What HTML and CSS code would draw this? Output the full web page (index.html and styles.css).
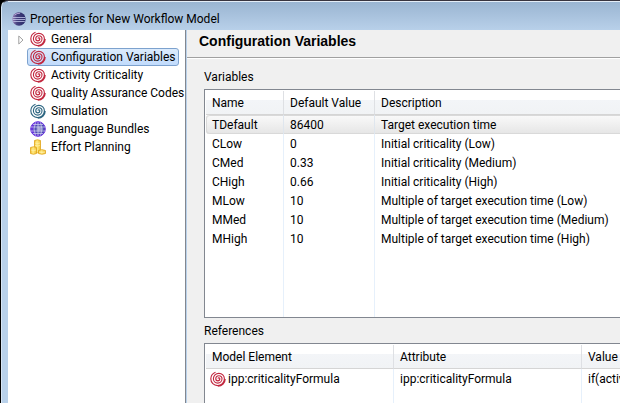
FILE: index.html
```html
<!DOCTYPE html>
<html lang="en">
<head>
<meta charset="utf-8">
<title>Properties for New Workflow Model</title>
<link rel="stylesheet" href="styles.css">
</head>
<body>
<svg class="defs" aria-hidden="true">
  <defs>
    <symbol id="spiral" viewBox="0 0 16 16">
      <path d="M8 7.600A.9 .9 0 0 1 9.800 7.800A2 2 0 0 1 5.800 7.800A3.100 3.100 0 0 1 12 7.800A4.300 4.300 0 0 1 3.400 7.800A5.500 5.500 0 0 1 14.400 7.800A6.800 6.800 0 0 1 .8 7.800A7.200 7.200 0 0 1 5.500 1.200M15.200 8A7.200 7.200 0 0 1 8 15.200" fill="none" stroke="currentColor" stroke-width="1.15"/>
    </symbol>
    <linearGradient id="orb" x1="0" y1="0" x2="1" y2="0">
      <stop offset="0" stop-color="#9a7fb5"/><stop offset=".35" stop-color="#44417f"/><stop offset="1" stop-color="#292a68"/>
    </linearGradient>
    <radialGradient id="world" cx=".6" cy=".5" r=".5">
      <stop offset="0" stop-color="#b5b8dc"/><stop offset=".6" stop-color="#4a4bb0"/><stop offset="1" stop-color="#6a35dc"/>
    </radialGradient>
    <linearGradient id="gold" x1="0" y1="0" x2="1" y2="0">
      <stop offset="0" stop-color="#f0bc25"/><stop offset=".4" stop-color="#ffec8a"/><stop offset="1" stop-color="#f1c030"/>
    </linearGradient>
  </defs>
</svg>
<div class="window">
  <header class="titlebar">
    <svg class="app-icon" viewBox="0 0 14 14" aria-hidden="true">
      <circle cx="7" cy="7" r="6.7" fill="url(#orb)"/>
      <path d="M1 5.5H13M.7 7.5H13.3M1.2 9.5H12.8" stroke="#c3c8ea" stroke-width=".8"/>
      <path d="M2.5 3Q5 1 8 1.2" stroke="#b9a7d6" fill="none"/>
    </svg>
    <span>Properties for New Workflow Model</span>
  </header>
  <div class="content">
    <nav class="tree">
      <a class="item" href="#general"><svg class="arrow" viewBox="0 0 6 10"><path d="M.8 1L5 5L.8 9Z" fill="#fff" stroke="#a0a0a0"/></svg><svg class="icon red"><use href="#spiral"/></svg><span>General</span></a>
      <a class="item selected" href="#variables" aria-current="page"><svg class="icon red"><use href="#spiral"/></svg><span>Configuration Variables</span></a>
      <a class="item" href="#criticality"><svg class="icon red"><use href="#spiral"/></svg><span>Activity Criticality</span></a>
      <a class="item" href="#quality"><svg class="icon red"><use href="#spiral"/></svg><span>Quality Assurance Codes</span></a>
      <a class="item" href="#simulation"><svg class="icon teal"><use href="#spiral"/></svg><span>Simulation</span></a>
      <a class="item" href="#bundles"><svg class="icon" viewBox="0 0 16 16"><circle cx="8" cy="8" r="7.3" fill="url(#world)" stroke="#6834dd"/><path d="M1 6H15M1 10H15M3 3.5H13M3 12.5H13M8 1V15M5.5 1.5Q2.5 8 5.5 14.5M10.5 1.5Q13.5 8 10.5 14.5" fill="none" stroke="#d5d6f0" stroke-width=".7"/></svg><span>Language Bundles</span></a>
      <a class="item" href="#effort"><svg class="icon" viewBox="0 0 16 16"><g fill="url(#gold)" stroke="#dfa51c" stroke-width=".8"><path d="M4.500 1.500Q7.500 0 10.500 1.500V13Q7.500 14.500 4.500 13Z"/><path d="M.5 8.500Q3.500 7 6.500 8.500V14.500Q3.500 16 .5 14.500Z"/><path d="M8.500 11.500Q12 9.800 15.500 11.500V14.500Q12 16 8.500 14.500Z"/></g><path d="M5 4Q7.500 5 10 4M5 6.500Q7.500 7.500 10 6.500M1 11Q3.500 12.200 6 11M9 13Q12 14 15 13" fill="none" stroke="#fff3b5" stroke-width=".7"/></svg><span>Effort Planning</span></a>
    </nav>
    <main class="page">
      <h1>Configuration Variables</h1>
      <section class="body">
        <h2>Variables</h2>
        <div class="grid variables">
          <table>
            <colgroup><col class="c-name"><col class="c-default"><col></colgroup>
            <thead><tr><th>Name</th><th>Default Value</th><th>Description</th></tr></thead>
            <tbody>
              <tr class="current"><td>TDefault</td><td>86400</td><td>Target execution time</td></tr>
              <tr><td>CLow</td><td>0</td><td>Initial criticality (Low)</td></tr>
              <tr><td>CMed</td><td>0.33</td><td>Initial criticality (Medium)</td></tr>
              <tr><td>CHigh</td><td>0.66</td><td>Initial criticality (High)</td></tr>
              <tr><td>MLow</td><td>10</td><td>Multiple of target execution time (Low)</td></tr>
              <tr><td>MMed</td><td>10</td><td>Multiple of target execution time (Medium)</td></tr>
              <tr><td>MHigh</td><td>10</td><td>Multiple of target execution time (High)</td></tr>
              <tr class="filler"><td></td><td></td><td></td></tr>
            </tbody>
          </table>
        </div>
        <h2>References</h2>
        <div class="grid references">
          <table>
            <colgroup><col class="c-element"><col class="c-attribute"><col></colgroup>
            <thead><tr><th>Model Element</th><th>Attribute</th><th>Value</th></tr></thead>
            <tbody>
              <tr><td class="with-icon"><div class="element"><svg class="icon red"><use href="#spiral"/></svg><span>ipp:criticalityFormula</span></div></td><td>ipp:criticalityFormula</td><td>if(activ</td></tr>
              <tr class="filler"><td></td><td></td><td></td></tr>
            </tbody>
          </table>
        </div>
      </section>
    </main>
  </div>
</div>
</body>
</html>
```
FILE: styles.css
```css
* { box-sizing: border-box; }

body {
  margin: 0;
  height: 100vh;
  overflow: hidden;
  background: #000;
  color: #000;
  font: 12px/18px Roboto, "Open Sans", sans-serif;
}

.defs { position: absolute; width: 0; height: 0; }

.window {
  display: flex;
  flex-direction: column;
  height: 100vh;
  margin-left: 1px;
  padding-left: 6px;
  border-top: 1px solid #38343f;
  border-left: 1px solid #d8e6f5;
  border-top-left-radius: 7px;
  background: linear-gradient(#99b4d1, #b9d1ea 30px);
}

.titlebar {
  display: flex;
  flex: none;
  align-items: center;
  gap: 4px;
  height: 29px;
  padding: 6px 0 0 4px;
  border-top: 1px solid #e4edf7;
}

.app-icon { width: 14px; height: 14px; }

.content {
  display: flex;
  flex: 1;
  min-height: 0;
}

.tree {
  flex: none;
  width: 178px;
  border-right: 1px solid #828790;
  background: #fff;
}

.item {
  display: flex;
  align-items: center;
  height: 18px;
  margin-left: 20px;
  position: relative;
  color: inherit;
  text-decoration: none;
  white-space: nowrap;
}

.item span { margin-left: 5px; }

.item.selected {
  width: 151px;
}

.item.selected::before {
  content: "";
  position: absolute;
  inset: 0 0 0 -1px;
  border: 1px solid #7da2ce;
  border-radius: 3px;
  background: linear-gradient(#dcebfc, #c1dbfc);
}

.item.selected > * { position: relative; }

.icon {
  flex: none;
  width: 16px;
  height: 16px;
  margin-left: 2px;
}

.red { color: #c2273f; }
.teal { color: #2c6580; }

.item .arrow {
  position: absolute;
  left: -10px;
  top: 5px;
  width: 6px;
  height: 10px;
}

.page {
  display: flex;
  flex: 1;
  flex-direction: column;
  min-width: 0;
  margin-left: 1px;
  background: #f0f0f0;
}

h1 {
  flex: none;
  height: 29px;
  margin: 0;
  padding-left: 12px;
  border-bottom: 1px solid #fff;
  box-shadow: inset 0 -1px #a0a0a0;
  font: bold 14px/23px "Liberation Sans", sans-serif;
}

.body {
  display: flex;
  flex: 1;
  flex-direction: column;
  min-height: 0;
  padding: 9px 0 0 17px;
}

h2 {
  flex: none;
  margin: 0;
  font: inherit;
}

.grid {
  overflow: hidden;
  padding: 1px 0 0 1px;
  border: 1px solid #828790;
  border-right: 0;
  background: #fff;
}

.variables {
  flex: none;
  height: 229px;
  margin: 3px 0 4px;
}

.references {
  flex: 1;
  margin-top: 3px;
  border-bottom: 0;
}

table {
  width: 100%;
  height: 100%;
  table-layout: fixed;
  border-collapse: separate;
  border-spacing: 0;
}

.c-name { width: 78px; }
.c-default { width: 91px; }
.c-element { width: 188px; }
.c-attribute { width: 188px; }

th, td {
  height: 19px;
  padding: 0 0 0 6px;
  border-right: 1px solid #e6f0fb;
  overflow: hidden;
  font-weight: normal;
  text-align: left;
  white-space: nowrap;
}

th {
  height: 24px;
  border-right-color: #dee0e4;
  border-bottom: 1px solid #d5d5d5;
  background: linear-gradient(#fff 9px, #f3f5f8 9px, #f1f3f5);
}

th:last-child, td:last-child { border-right: 0; }

.current td {
  border-right-color: #dfe6ee;
  background: linear-gradient(#fafafa, #e5e5e5);
  box-shadow: inset 0 1px #d9d9d9, inset 0 -1px #d9d9d9;
}

.current td:first-child {
  border-left: 1px solid #d9d9d9;
  border-radius: 3px 0 0 3px;
  padding-left: 5px;
}

.filler td { height: auto; }

.with-icon { padding-left: 2px; }
.element { display: flex; align-items: center; gap: 2px; }
```
